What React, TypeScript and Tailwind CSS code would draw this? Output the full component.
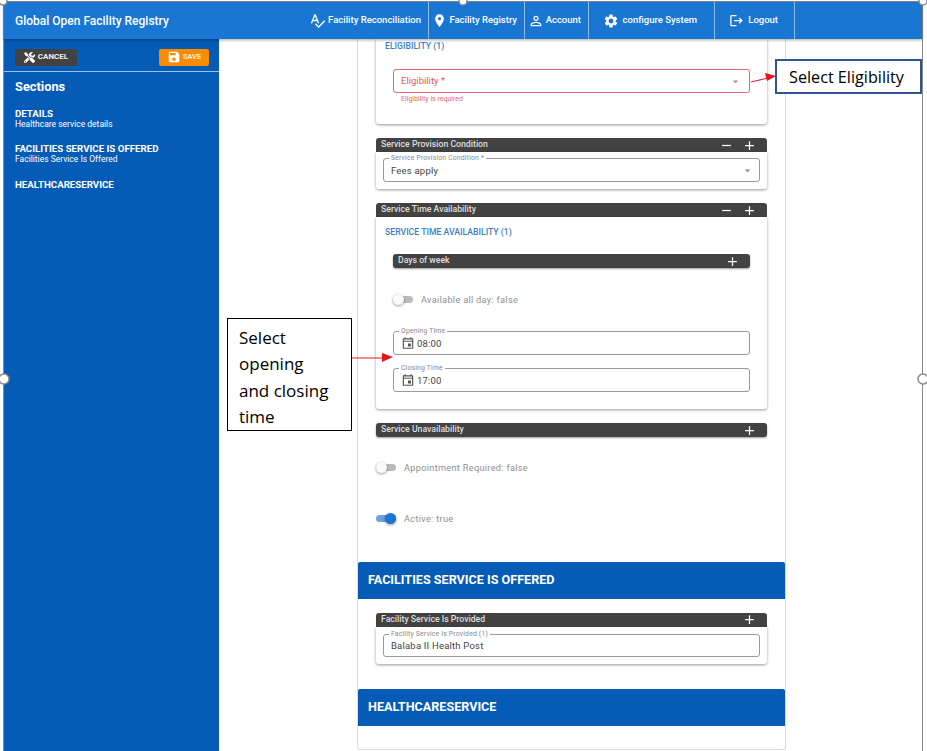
import { MdSpellcheck, MdLocationOn, MdPersonOutline, MdSettings, MdLogout, MdSave, MdOutlineEvent, MdArrowDropDown, MdAdd, MdRemove } from "react-icons/md";
import { FaTools } from "react-icons/fa";
import type { ReactNode } from "react";

const NAV = [
  { icon: <MdSpellcheck className="text-[17px]" />, label: "Facility Reconciliation", cls: "w-[122px] pr-[7px]" },
  { icon: <MdLocationOn className="text-[15px]" />, label: "Facility Registry", cls: "w-[96px] pr-[7px]" },
  { icon: <MdPersonOutline className="text-[16px]" />, label: "Account", cls: "w-[64px] pr-[7px]" },
  { icon: <MdSettings className="mr-[2px] text-[16px]" />, label: "configure System", cls: "w-[126px] pr-[17px]" },
  { icon: <MdLogout className="mr-[2px] text-[15px]" />, label: "Logout", cls: "w-[80px] pr-[16px]" },
];

function Bar({ title, minus, rounded }: { title: string; minus?: boolean; rounded?: boolean }) {
  return (
    <div className={`flex h-[14px] items-center bg-[#424242] pl-[5px] pr-[10px] text-[8.7px] font-medium text-[#dedede] ${rounded ? "rounded-[3px] shadow-[0_1px_2px_rgba(0,0,0,0.4)]" : "rounded-t-[3px]"}`}>
      <span className="flex-1">{title}</span>
      {minus && <MdRemove className="mr-[8px] text-[15px] text-white" />}
      <MdAdd className="text-[15px] text-white" />
    </div>
  );
}

function Field({ label, value, icon, select, h = "h-[24px]" }: { label: string; value: string; icon?: boolean; select?: boolean; h?: string }) {
  return (
    <div className={`relative flex ${h} items-center rounded-[3px] border border-[#9a9a9a] pl-[7px] pr-[5px] text-[9.5px] tracking-[0.2px] text-[#444]`}>
      <span className="absolute -top-[5px] left-[5px] bg-white px-[2px] text-[6.8px] leading-[9px] text-[#888]">{label}</span>
      {icon && <MdOutlineEvent className="mr-[2px] text-[14px] text-[#555]" />}
      <span className="flex-1 pt-[2px]">{value}</span>
      {select && <MdArrowDropDown className="text-[13px] text-[#888]" />}
    </div>
  );
}

function Toggle({ on, label }: { on?: boolean; label: string }) {
  return (
    <div className="flex items-center gap-[8px] text-[9.2px] tracking-[0.3px] text-[#8f8f8f]">
      <span className={`relative block h-[7px] w-[20px] rounded-full ${on ? "bg-[#6f9fdc]" : "bg-[#bbb]"}`}>
        <span className={`absolute -top-[2px] block h-[11px] w-[11px] rounded-full shadow-[0_1px_3px_rgba(0,0,0,0.4)] ${on ? "right-0 bg-[#1976d2]" : "left-0 bg-[#fafafa]"}`} />
      </span>
      {label}
    </div>
  );
}

function Card({ children, className = "" }: { children: ReactNode; className?: string }) {
  return <div className={`rounded-b-[3px] bg-white shadow-[0_1px_3px_rgba(0,0,0,0.4)] ${className}`}>{children}</div>;
}

function SectionHead({ title }: { title: string }) {
  return (
    <div className="flex h-[37px] items-center rounded-t-[2px] bg-[#055bb5] pl-[10px] text-[12.6px] font-bold text-white">
      {title}
    </div>
  );
}

export default function App() {
  return (
    <div className="relative h-[751px] w-[927px] overflow-hidden bg-white pl-[4px] pr-[5px] pt-[2px] [font-family:Roboto,sans-serif]">
      {/* header */}
      <header className="relative z-10 flex h-[37px] items-center bg-[#1976d2] pl-[11px] pr-[127px] text-white shadow-[0_1px_3px_rgba(0,0,0,0.35)]">
        <div className="flex-1 text-[12px] font-medium">Global Open Facility Registry</div>
        {NAV.map((n) => (
          <div key={n.label} className={`flex h-full shrink-0 items-center justify-end gap-[2px] whitespace-nowrap border-r border-[#8fbbe8] text-[9.5px] font-medium ${n.cls}`}>
            {n.icon}
            <span>{n.label}</span>
          </div>
        ))}
      </header>

      <div className="flex h-[712px]">
        {/* sidebar */}
        <aside className="w-[215px] shrink-0 bg-[#055bb5] text-white">
          <div className="flex h-[33px] items-center justify-between border-b border-[#9cc2ea] pl-[11px] pr-[10px] pt-[4px]">
            <button className="flex h-[17px] w-[62px] items-center justify-center gap-[3px] rounded-[2px] bg-[#424242] text-[8px] font-bold text-[#eee]">
              <FaTools className="text-[11px] text-white" />
              CANCEL
            </button>
            <button className="flex h-[17px] w-[50px] items-center justify-center gap-[2px] rounded-[2px] bg-[#fb8c00] text-[7.5px] font-bold text-[#fdf0dc]">
              <MdSave className="text-[14px] text-white" />
              SAVE
            </button>
          </div>
          <div className="px-[11px] pt-[7px]">
            <div className="text-[12.8px] font-bold leading-[16px]">Sections</div>
            <div className="mt-[13px] text-[9.7px] font-bold leading-[11px]">DETAILS</div>
            <div className="text-[8.5px] leading-[11px]">Healthcare service details</div>
            <div className="mt-[13px] text-[9.7px] font-bold leading-[11px]">FACILITIES SERVICE IS OFFERED</div>
            <div className="text-[8.5px] leading-[11px]">Facilities Service Is Offered</div>
            <div className="mt-[14px] text-[9.7px] font-bold leading-[11px]">HEALTHCARESERVICE</div>
          </div>
        </aside>

        {/* form column */}
        <main className="flex flex-1 justify-center pl-[2px]">
          <div className="h-[711px] w-[429px] rounded-b-[3px] border-x border-b border-[#dcdcdc]">
            <div className="px-[18px]">
              <Card className="h-[85px] px-[9px]">
                <div className="pt-[2px] text-[8.7px] font-medium leading-[11px] text-[#3d7fc4]">ELIGIBILITY (1)</div>
                <div className="mx-[8px] mt-[17px] flex h-[24px] items-center rounded-[3px] border border-[#e06b6b] pl-[7px] pr-[7px] text-[9.5px] text-[#e05a5a]">
                  <span className="flex-1">Eligibility *</span>
                  <MdArrowDropDown className="text-[13px] text-[#c98080]" />
                </div>
                <div className="mx-[16px] mt-[2px] text-[7px] leading-[9px] text-[#e26a6a]">Eligibility is required</div>
              </Card>

              <div className="mt-[14px]">
                <Bar title="Service Provision Condition" minus />
                <Card className="h-[37px] pl-[7px] pr-[7px] pt-[6px]">
                  <Field label="Service Provision Condition *" value="Fees apply" select />
                </Card>
              </div>

              <div className="mt-[14px]">
                <Bar title="Service Time Availability" minus />
                <Card className="h-[192px] px-[9px]">
                  <div className="pt-[10px] text-[8.7px] font-medium leading-[11px] text-[#3d7fc4]">SERVICE TIME AVAILABILITY (1)</div>
                  <div className="mx-[8px] mt-[16px]">
                    <Bar title="Days of week" rounded />
                  </div>
                  <div className="mx-[8px] mt-[25px]">
                    <Toggle label="Available all day: false" />
                  </div>
                  <div className="mx-[8px] mt-[24px]">
                    <Field label="Opening Time" value="08:00" icon />
                  </div>
                  <div className="mx-[8px] mt-[13px]">
                    <Field label="Closing Time" value="17:00" icon />
                  </div>
                </Card>
              </div>

              <div className="mt-[14px]">
                <Bar title="Service Unavailability" rounded />
              </div>
              <div className="mt-[24px]">
                <Toggle label="Appointment Required: false" />
              </div>
              <div className="mt-[37px]">
                <Toggle on label="Active: true" />
              </div>
            </div>

            <div className="mt-[36px]">
              <SectionHead title="FACILITIES SERVICE IS OFFERED" />
            </div>
            <div className="mt-[14px] px-[18px]">
              <Bar title="Facility Service Is Provided" />
              <Card className="h-[37px] pl-[7px] pr-[7px] pt-[7px]">
                <Field label="Facility Service Is Provided (1)" value="Balaba II Health Post" h="h-[23px]" />
              </Card>
            </div>

            <div className="mt-[25px]">
              <SectionHead title="HEALTHCARESERVICE" />
            </div>
          </div>
        </main>
      </div>

      {/* word selection frame, callouts and arrows drawn over the screenshot */}
      <div className="pointer-events-none absolute left-[3px] top-[1px] h-[750px] w-[920px] border-x border-t border-[#8a8a8a]" />
      <svg className="pointer-events-none absolute left-0 top-0 z-20" width="927" height="751">
        <circle cx="3" cy="1" r="4" fill="white" stroke="#8a8a8a" strokeWidth="1.5" />
        <circle cx="463" cy="1" r="4" fill="white" stroke="#8a8a8a" strokeWidth="1.5" />
        <circle cx="923" cy="1" r="4" fill="white" stroke="#8a8a8a" strokeWidth="1.5" />
        <circle cx="4" cy="379" r="5" fill="white" stroke="#8a8a8a" strokeWidth="1.5" />
        <circle cx="923" cy="379" r="5" fill="white" stroke="#8a8a8a" strokeWidth="1.5" />
        <line x1="751" y1="82" x2="768" y2="78" stroke="#e8141c" strokeWidth="1" />
        <polygon points="776,76 765,73 767,81" fill="#e8141c" />
        <line x1="350" y1="358" x2="384" y2="358" stroke="#e8141c" strokeWidth="1" />
        <polygon points="393,357 382,353 382,362" fill="#e8141c" />
      </svg>
      <div className="absolute left-[775px] top-[59px] z-20 h-[35px] w-[147px] border-2 border-[#2f5597] bg-white pl-[12px] pt-[6px] text-[16.2px] leading-[20px] whitespace-nowrap text-black [font-family:'Open_Sans',sans-serif]">
        Select Eligibility
      </div>
      <div className="absolute left-[227px] top-[318px] z-20 h-[113px] w-[125px] border border-black bg-white pl-[11px] pt-[6px] text-[17px] leading-[26.3px] text-black [font-family:'Open_Sans',sans-serif]">
        Select<br />opening<br />and closing<br />time
      </div>
    </div>
  );
}
